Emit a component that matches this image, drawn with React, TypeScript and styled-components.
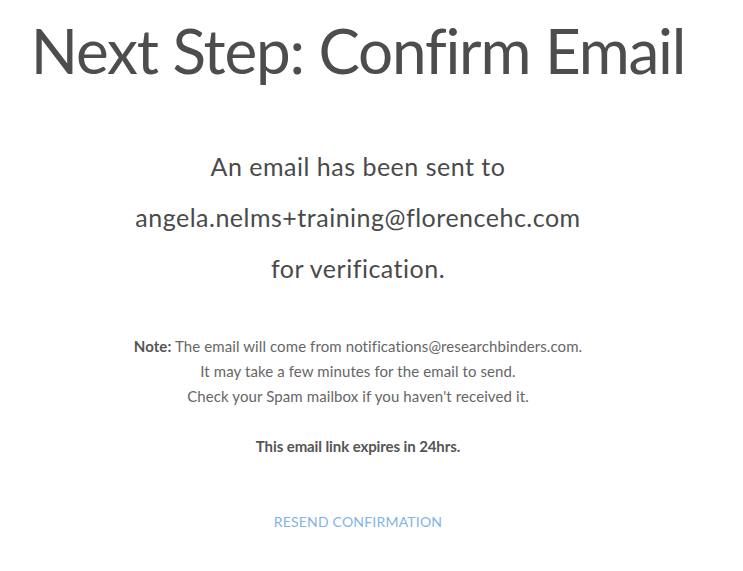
import styled, { createGlobalStyle } from "styled-components";

const GlobalStyle = createGlobalStyle`
  body {
    margin: 0;
    background: #ffffff;
    font-family: Lato, "Open Sans", sans-serif;
  }
`;

const Page = styled.div`
  width: 716px;
  display: flex;
  flex-direction: column;
  align-items: center;
  text-align: center;
  color: #4a4a4a;
`;

const Title = styled.h1`
  margin: 12px 0 0;
  font-size: 62px;
  font-weight: 400;
  line-height: 76px;
  letter-spacing: -1.2px;
  white-space: nowrap;
  color: #4d4d4d;
`;

const SentBlock = styled.div`
  margin-top: 53px;
  display: flex;
  flex-direction: column;
`;

const SentLine = styled.p`
  margin: 0;
  font-size: 25px;
  line-height: 51px;
  letter-spacing: 0.5px;
`;

const NoteBlock = styled.div`
  margin-top: 40px;
  font-size: 15px;
  line-height: 25px;
  letter-spacing: 0.1px;
  color: #666666;
`;

const NoteLine = styled.p<{ $bold?: boolean; $gap?: number }>`
  margin: ${(p) => p.$gap ?? 0}px 0 0;
  font-weight: ${(p) => (p.$bold ? 700 : 400)};
  letter-spacing: ${(p) => (p.$bold ? "-0.1px" : "inherit")};
  color: ${(p) => (p.$bold ? "#555555" : "#666666")};
  b {
    color: #555555;
  }
`;

const ResendButton = styled.button`
  margin-top: 54px;
  border: none;
  background: none;
  padding: 0;
  font-family: inherit;
  font-size: 14px;
  line-height: 17px;
  letter-spacing: 0.2px;
  text-transform: uppercase;
  color: #7fb4e8;
  cursor: pointer;
`;

function App() {
  return (
    <Page>
      <GlobalStyle />
      <Title>Next Step: Confirm Email</Title>
      <SentBlock>
        <SentLine>An email has been sent to</SentLine>
        <SentLine>angela.nelms+training@florencehc.com</SentLine>
        <SentLine>for verification.</SentLine>
      </SentBlock>
      <NoteBlock>
        <NoteLine>
          <b>Note:</b> The email will come from notifications@researchbinders.com.
        </NoteLine>
        <NoteLine>It may take a few minutes for the email to send.</NoteLine>
        <NoteLine>Check your Spam mailbox if you haven't received it.</NoteLine>
        <NoteLine $bold $gap={25}>
          This email link expires in 24hrs.
        </NoteLine>
      </NoteBlock>
      <ResendButton>Resend Confirmation</ResendButton>
    </Page>
  );
}

export default App;
